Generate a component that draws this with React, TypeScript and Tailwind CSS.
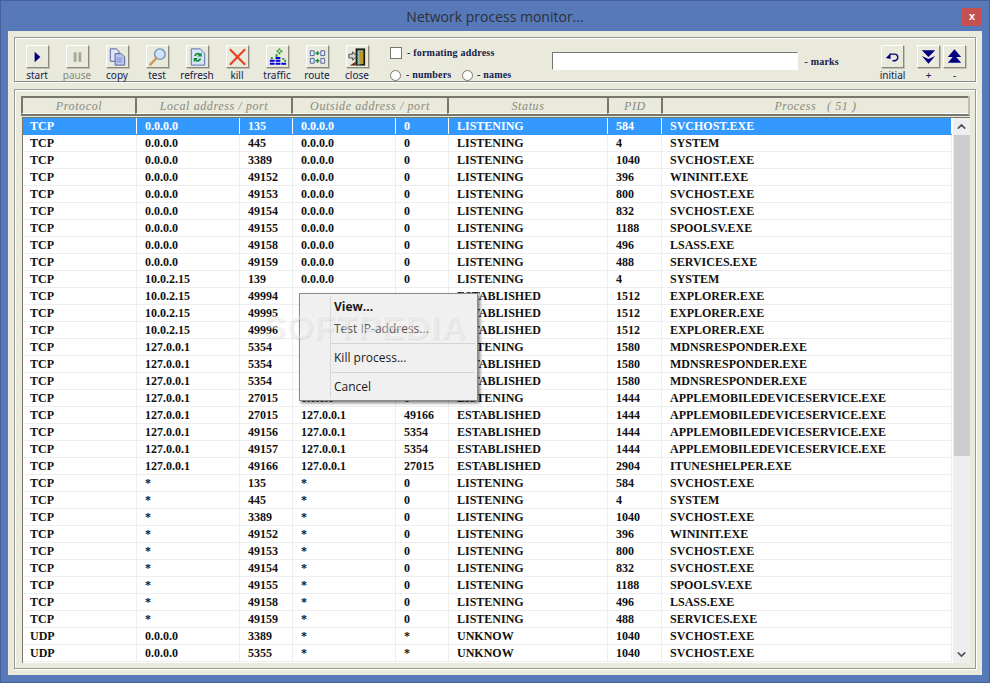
import type { ReactNode } from "react";
import { ChevronUp, ChevronDown } from "lucide-react";

type Row = [string, string, string, string, string, string, string, string];

const rows: Row[] = [
  ["TCP", "0.0.0.0", "135", "0.0.0.0", "0", "LISTENING", "584", "SVCHOST.EXE"],
  ["TCP", "0.0.0.0", "445", "0.0.0.0", "0", "LISTENING", "4", "SYSTEM"],
  ["TCP", "0.0.0.0", "3389", "0.0.0.0", "0", "LISTENING", "1040", "SVCHOST.EXE"],
  ["TCP", "0.0.0.0", "49152", "0.0.0.0", "0", "LISTENING", "396", "WININIT.EXE"],
  ["TCP", "0.0.0.0", "49153", "0.0.0.0", "0", "LISTENING", "800", "SVCHOST.EXE"],
  ["TCP", "0.0.0.0", "49154", "0.0.0.0", "0", "LISTENING", "832", "SVCHOST.EXE"],
  ["TCP", "0.0.0.0", "49155", "0.0.0.0", "0", "LISTENING", "1188", "SPOOLSV.EXE"],
  ["TCP", "0.0.0.0", "49158", "0.0.0.0", "0", "LISTENING", "496", "LSASS.EXE"],
  ["TCP", "0.0.0.0", "49159", "0.0.0.0", "0", "LISTENING", "488", "SERVICES.EXE"],
  ["TCP", "10.0.2.15", "139", "0.0.0.0", "0", "LISTENING", "4", "SYSTEM"],
  ["TCP", "10.0.2.15", "49994", "", "", "ESTABLISHED", "1512", "EXPLORER.EXE"],
  ["TCP", "10.0.2.15", "49995", "", "", "ESTABLISHED", "1512", "EXPLORER.EXE"],
  ["TCP", "10.0.2.15", "49996", "", "", "ESTABLISHED", "1512", "EXPLORER.EXE"],
  ["TCP", "127.0.0.1", "5354", "", "", "LISTENING", "1580", "MDNSRESPONDER.EXE"],
  ["TCP", "127.0.0.1", "5354", "", "", "ESTABLISHED", "1580", "MDNSRESPONDER.EXE"],
  ["TCP", "127.0.0.1", "5354", "", "", "ESTABLISHED", "1580", "MDNSRESPONDER.EXE"],
  ["TCP", "127.0.0.1", "27015", "0.0.0.0", "0", "LISTENING", "1444", "APPLEMOBILEDEVICESERVICE.EXE"],
  ["TCP", "127.0.0.1", "27015", "127.0.0.1", "49166", "ESTABLISHED", "1444", "APPLEMOBILEDEVICESERVICE.EXE"],
  ["TCP", "127.0.0.1", "49156", "127.0.0.1", "5354", "ESTABLISHED", "1444", "APPLEMOBILEDEVICESERVICE.EXE"],
  ["TCP", "127.0.0.1", "49157", "127.0.0.1", "5354", "ESTABLISHED", "1444", "APPLEMOBILEDEVICESERVICE.EXE"],
  ["TCP", "127.0.0.1", "49166", "127.0.0.1", "27015", "ESTABLISHED", "2904", "ITUNESHELPER.EXE"],
  ["TCP", "*", "135", "*", "0", "LISTENING", "584", "SVCHOST.EXE"],
  ["TCP", "*", "445", "*", "0", "LISTENING", "4", "SYSTEM"],
  ["TCP", "*", "3389", "*", "0", "LISTENING", "1040", "SVCHOST.EXE"],
  ["TCP", "*", "49152", "*", "0", "LISTENING", "396", "WININIT.EXE"],
  ["TCP", "*", "49153", "*", "0", "LISTENING", "800", "SVCHOST.EXE"],
  ["TCP", "*", "49154", "*", "0", "LISTENING", "832", "SVCHOST.EXE"],
  ["TCP", "*", "49155", "*", "0", "LISTENING", "1188", "SPOOLSV.EXE"],
  ["TCP", "*", "49158", "*", "0", "LISTENING", "496", "LSASS.EXE"],
  ["TCP", "*", "49159", "*", "0", "LISTENING", "488", "SERVICES.EXE"],
  ["UDP", "0.0.0.0", "3389", "*", "*", "UNKNOW", "1040", "SVCHOST.EXE"],
  ["UDP", "0.0.0.0", "5355", "*", "*", "UNKNOW", "1040", "SVCHOST.EXE"],
];

const cellStyles = [
  "w-[114px] pl-[7px]",
  "w-[103px] pl-[8px]",
  "w-[53px] pl-[8px]",
  "w-[103px] pl-[8px]",
  "w-[53px] pl-[8px]",
  "w-[159px] pl-[8px]",
  "w-[54px] pl-[8px]",
  "flex-1 pl-[8px]",
];

const icons: Record<string, ReactNode> = {
  start: <path d="M8 5.5 L14 11 L8 16.5 Z" fill="#000080" />,
  pause: (
    <g fill="#a8a898">
      <rect x="7" y="6" width="3" height="10" />
      <rect x="12" y="6" width="3" height="10" />
    </g>
  ),
  copy: (
    <g stroke="#50609c" strokeWidth="1">
      <path d="M3.5 2.5 H10 L12.5 5 V15.5 H3.5 Z" fill="#dfe4f6" />
      <path d="M8.5 7.5 H15 L18.5 11 V19.5 H8.5 Z" fill="#bcc8f0" />
      <path d="M10 12 H16 M10 14 H16 M10 16 H16" stroke="#7f8fd0" />
    </g>
  ),
  test: (
    <g>
      <circle cx="13.5" cy="8" r="5.5" fill="#cfe4fa" stroke="#6f8cb8" strokeWidth="1.4" />
      <path d="M10 12 L3.5 19" stroke="#c89a50" strokeWidth="2.4" strokeLinecap="round" />
    </g>
  ),
  refresh: (
    <g>
      <path d="M4.5 2.5 H14 L18.5 7 V19.5 H4.5 Z" fill="#d8e4f8" stroke="#5070a8" />
      <path d="M7.5 10 A4 4 0 0 1 14 7.5 L15.5 6 V10.5 H11 L12.5 9 A2 2 0 0 0 9.5 10 Z" fill="#109030" />
      <path d="M15 12.5 A4 4 0 0 1 8.5 15 L7 16.5 V12 H11.5 L10 13.5 A2 2 0 0 0 13 12.5 Z" fill="#109030" />
    </g>
  ),
  kill: <path d="M3 3 L19 19 M19 3 L3 19" stroke="#e8401c" strokeWidth="2.2" fill="none" />,
  traffic: (
    <g>
      <path d="M4 11h2v2H4z M9 8h2v3H9z M10 4h2v2h-2z M12 2h2v2h-2z M12 6h2v2h-2z M14 4h2v2h-2z M16 12h2v2h-2z M18 14h2v2h-2z" fill="#2a9a2a" />
      <path d="M3 14h5v2H3z M9 11h5v2H9z M9 14h5v2H9z M3 17h5v2H3z M9 17h5v2H9z M15 17h5v2h-5z" fill="#0000e0" />
    </g>
  ),
  route: (
    <g>
      <path d="M3.5 4.5h4v5h-4z M14.5 4.5h4v5h-4z M3.5 12.5h4v5h-4z M14.5 12.5h4v5h-4z" fill="#e8eaf8" stroke="#5060a0" />
      <path d="M9 7h4 M11 5v4 M9 15h4 M11 13v4" stroke="#109030" strokeWidth="1.6" />
    </g>
  ),
  close: (
    <g>
      <path d="M9 2h10v18H9z" fill="#1a1a10" />
      <path d="M11 4h6v14l-6 1z" fill="#8cc0c8" />
      <path d="M13 5h4v13h-4z" fill="#c09820" />
      <path d="M2 8h4V5.5L10 10l-4 4.5V12H2z" fill="#d8d8d0" stroke="#222" strokeWidth="0.8" />
      <path d="M3 20l6-4v4z" fill="#702010" />
    </g>
  ),
  initial: (
    <g fill="none">
      <path d="M8 8 H13 A3.5 3.5 0 0 1 13 15 H11" stroke="#000080" strokeWidth="1.5" />
      <path d="M4 12 L9 7 V13 Z" fill="#000080" />
    </g>
  ),
  plus: <path d="M4 4h14l-7 7z M4 10l7 3 7-3-7 8z" fill="#000080" />,
  minus: <path d="M11 3l7 8H4z M11 9l7 8H4z" fill="#000080" />,
};

function ToolIcon({ name }: { name: string }) {
  return (
    <svg width="22" height="22" viewBox="0 0 22 22" className="block">
      {icons[name]}
    </svg>
  );
}

function ToolButton({ name, label, muted, className }: { name: string; label: string; muted?: boolean; className?: string }) {
  return (
    <div className={`flex flex-col items-center ${className ?? "w-[40px]"}`}>
      <div className="w-[23px] h-[23px] bg-[#e9e9dc] border border-t-white border-l-white border-b-[#8a8a80] border-r-[#8a8a80] shadow-[1px_1px_0_#c0c0b4] flex items-center justify-center">
        <ToolIcon name={name} />
      </div>
      <span className={`mt-[1px] text-[10px] leading-[12px] font-['Noto_Sans',sans-serif] ${muted ? "text-[#8a8a80]" : "text-[#14204e]"}`}>
        {label}
      </span>
    </div>
  );
}

function Radio({ checked }: { checked?: boolean }) {
  return (
    <span className="w-[11px] h-[11px] rounded-full bg-white border border-[#77776e] flex items-center justify-center">
      {checked && <span className="w-[3px] h-[3px] rounded-full bg-black" />}
    </span>
  );
}

function HeaderCell({ label, className }: { label: string; className: string }) {
  return (
    <div className={`${className} h-full flex items-center justify-center border-l-2 border-t-2 border-l-[#77776e] border-t-[#77776e] border-b border-b-white italic text-[12px] tracking-[0.6px] text-[#8a8a7c]`}>
      {label}
    </div>
  );
}

export default function App() {
  return (
    <div className="w-[990px] h-[683px] bg-[#5779b9] border border-[#46619a] pt-[30px] pl-[7px] overflow-hidden relative">
      {/* title bar */}
      <div className="absolute left-0 right-0 top-[7px] text-center text-[14px] leading-[18px] text-[#2b2f38] font-['Open_Sans',sans-serif]">
        Network process monitor...
      </div>
      <div className="absolute right-[7px] top-[7px] w-[20px] h-[18px] bg-[#c75050] text-white text-[11px] leading-[17px] font-bold text-center font-['Liberation_Sans',sans-serif]">
        x
      </div>

      <div className="w-[974px] h-[644px] bg-[#e9e9dc] p-[6px] flex flex-col gap-[7px]">
        {/* toolbar */}
        <div className="h-[45px] border border-[#9a9a90] border-b-[#8a8a80] shadow-[inset_1px_1px_0_#fff,1px_1px_0_#fff] flex items-start pt-[7px] pl-[-1px]">
          <div className="flex ml-[-10px] pl-[0px]">
            <div className="w-[12px]" />
            <ToolButton name="start" label="start" className="w-[40px]" />
            <ToolButton name="pause" label="pause" muted />
            <ToolButton name="copy" label="copy" />
            <ToolButton name="test" label="test" />
            <ToolButton name="refresh" label="refresh" />
            <ToolButton name="kill" label="kill" />
            <ToolButton name="traffic" label="traffic" />
            <ToolButton name="route" label="route" />
            <ToolButton name="close" label="close" />
          </div>
          <div className="ml-[13px] flex flex-col gap-[5px] text-[10px] leading-[12px] tracking-[0.2px] font-bold text-[#14204e] font-['Liberation_Serif',serif]">
            <div className="flex items-center gap-[5px] h-[12px] mt-[2px]">
              <span className="w-[12px] h-[12px] bg-white border border-[#77776e]" />
              <span>- formating address</span>
            </div>
            <div className="flex items-center h-[12px] mt-[5px]">
              <Radio />
              <span className="ml-[5px] w-[56px]">- numbers</span>
              <Radio />
              <span className="ml-[4px]">- names</span>
            </div>
          </div>
          <div className="ml-[41px] mt-[7px] flex items-center">
            <div className="w-[246px] h-[18px] bg-white border border-t-[#77776e] border-l-[#77776e] border-b-white border-r-white" />
            <span className="ml-[6px] text-[10px] tracking-[0.2px] font-bold text-[#14204e] font-['Liberation_Serif',serif]">- marks</span>
          </div>
          <div className="ml-auto flex mr-[9px]">
            <ToolButton name="initial" label="initial" className="w-[23px] mr-[13px]" />
            <ToolButton name="plus" label="+" className="w-[23px] mr-[3px]" />
            <ToolButton name="minus" label="-" className="w-[23px]" />
          </div>
        </div>

        {/* connection list */}
        <div className="h-[580px] border border-[#9a9a90] shadow-[inset_1px_1px_0_#fff,1px_1px_0_#fff] pt-[6px] pl-[6px] pr-[5px] font-['Liberation_Serif',serif]">
          <div className="flex h-[20px] w-[949px] border-b-2 border-b-[#77776e] border-r-2 border-r-[#bdbdb0]">
            <HeaderCell label="Protocol" className="w-[114px]" />
            <HeaderCell label="Local address / port" className="w-[156px]" />
            <HeaderCell label="Outside address / port" className="w-[156px]" />
            <HeaderCell label="Status" className="w-[160px]" />
            <HeaderCell label="PID" className="w-[54px]" />
            <HeaderCell label="Process   ( 51 )" className="flex-1 whitespace-pre" />
          </div>
          <div className="mt-[1px] ml-[1px] w-[948px] h-[546px] bg-white border-l border-t border-[#77776e] flex overflow-hidden relative">
            <div className="w-[929px] shrink-0">
              {rows.map((r, i) => (
                <div
                  key={i}
                  className={`flex h-[17px] border-b text-[12px] leading-[16px] font-bold ${i === 0 ? "bg-[#3399ff] text-white border-[#3399ff]" : "text-[#111111] border-[#eeeeee]"}`}
                >
                  {r.map((c, j) => (
                    <div key={j} className={`${cellStyles[j]} whitespace-nowrap border-r ${i === 0 ? "border-white" : "border-[#eeeeee]"}`}>
                      {c}
                    </div>
                  ))}
                </div>
              ))}
            </div>
            <div className="ml-[1px] w-[17px] bg-[#eeeeee] flex flex-col items-center">
              <div className="h-[17px] flex items-center justify-center">
                <ChevronUp size={13} strokeWidth={3} className="text-[#555555]" />
              </div>
              <div className="w-[16px] h-[321px] bg-[#cdcdcd]" />
              <div className="mt-auto h-[17px] flex items-center justify-center">
                <ChevronDown size={13} strokeWidth={3} className="text-[#555555]" />
              </div>
            </div>
          </div>
        </div>
      </div>

      {/* context menu */}
      <div className="absolute left-[298px] top-[292px] w-[179px] h-[108px] bg-[#f0f0f0] border border-[#8a8a8a] shadow-[2px_2px_3px_rgba(0,0,0,0.5)] font-['Open_Sans',sans-serif] text-[12px] text-[#1a1a1a] pl-[34px] pt-[2px]">
        <div className="absolute left-[30px] top-[2px] bottom-[2px] border-l border-[#d8d8d8]" />
        <div className="h-[22px] leading-[22px] font-bold">View...</div>
        <div className="h-[22px] leading-[22px] text-[#555555]">Test IP-address...</div>
        <div className="h-px bg-[#d4d4d4] -ml-[4px] mr-[2px] my-[3px]" />
        <div className="h-[22px] leading-[22px]">Kill process...</div>
        <div className="h-px bg-[#d4d4d4] -ml-[4px] mr-[2px] my-[3px]" />
        <div className="h-[22px] leading-[22px]">Cancel</div>
      </div>
      <div className="absolute left-[262px] top-[306px] text-[34px] leading-[40px] font-bold tracking-[1px] text-white/40 [text-shadow:1px_1px_1px_rgba(0,0,0,0.08)] font-['Liberation_Sans',sans-serif] pointer-events-none">
        SOFTPEDIA
      </div>
    </div>
  );
}
